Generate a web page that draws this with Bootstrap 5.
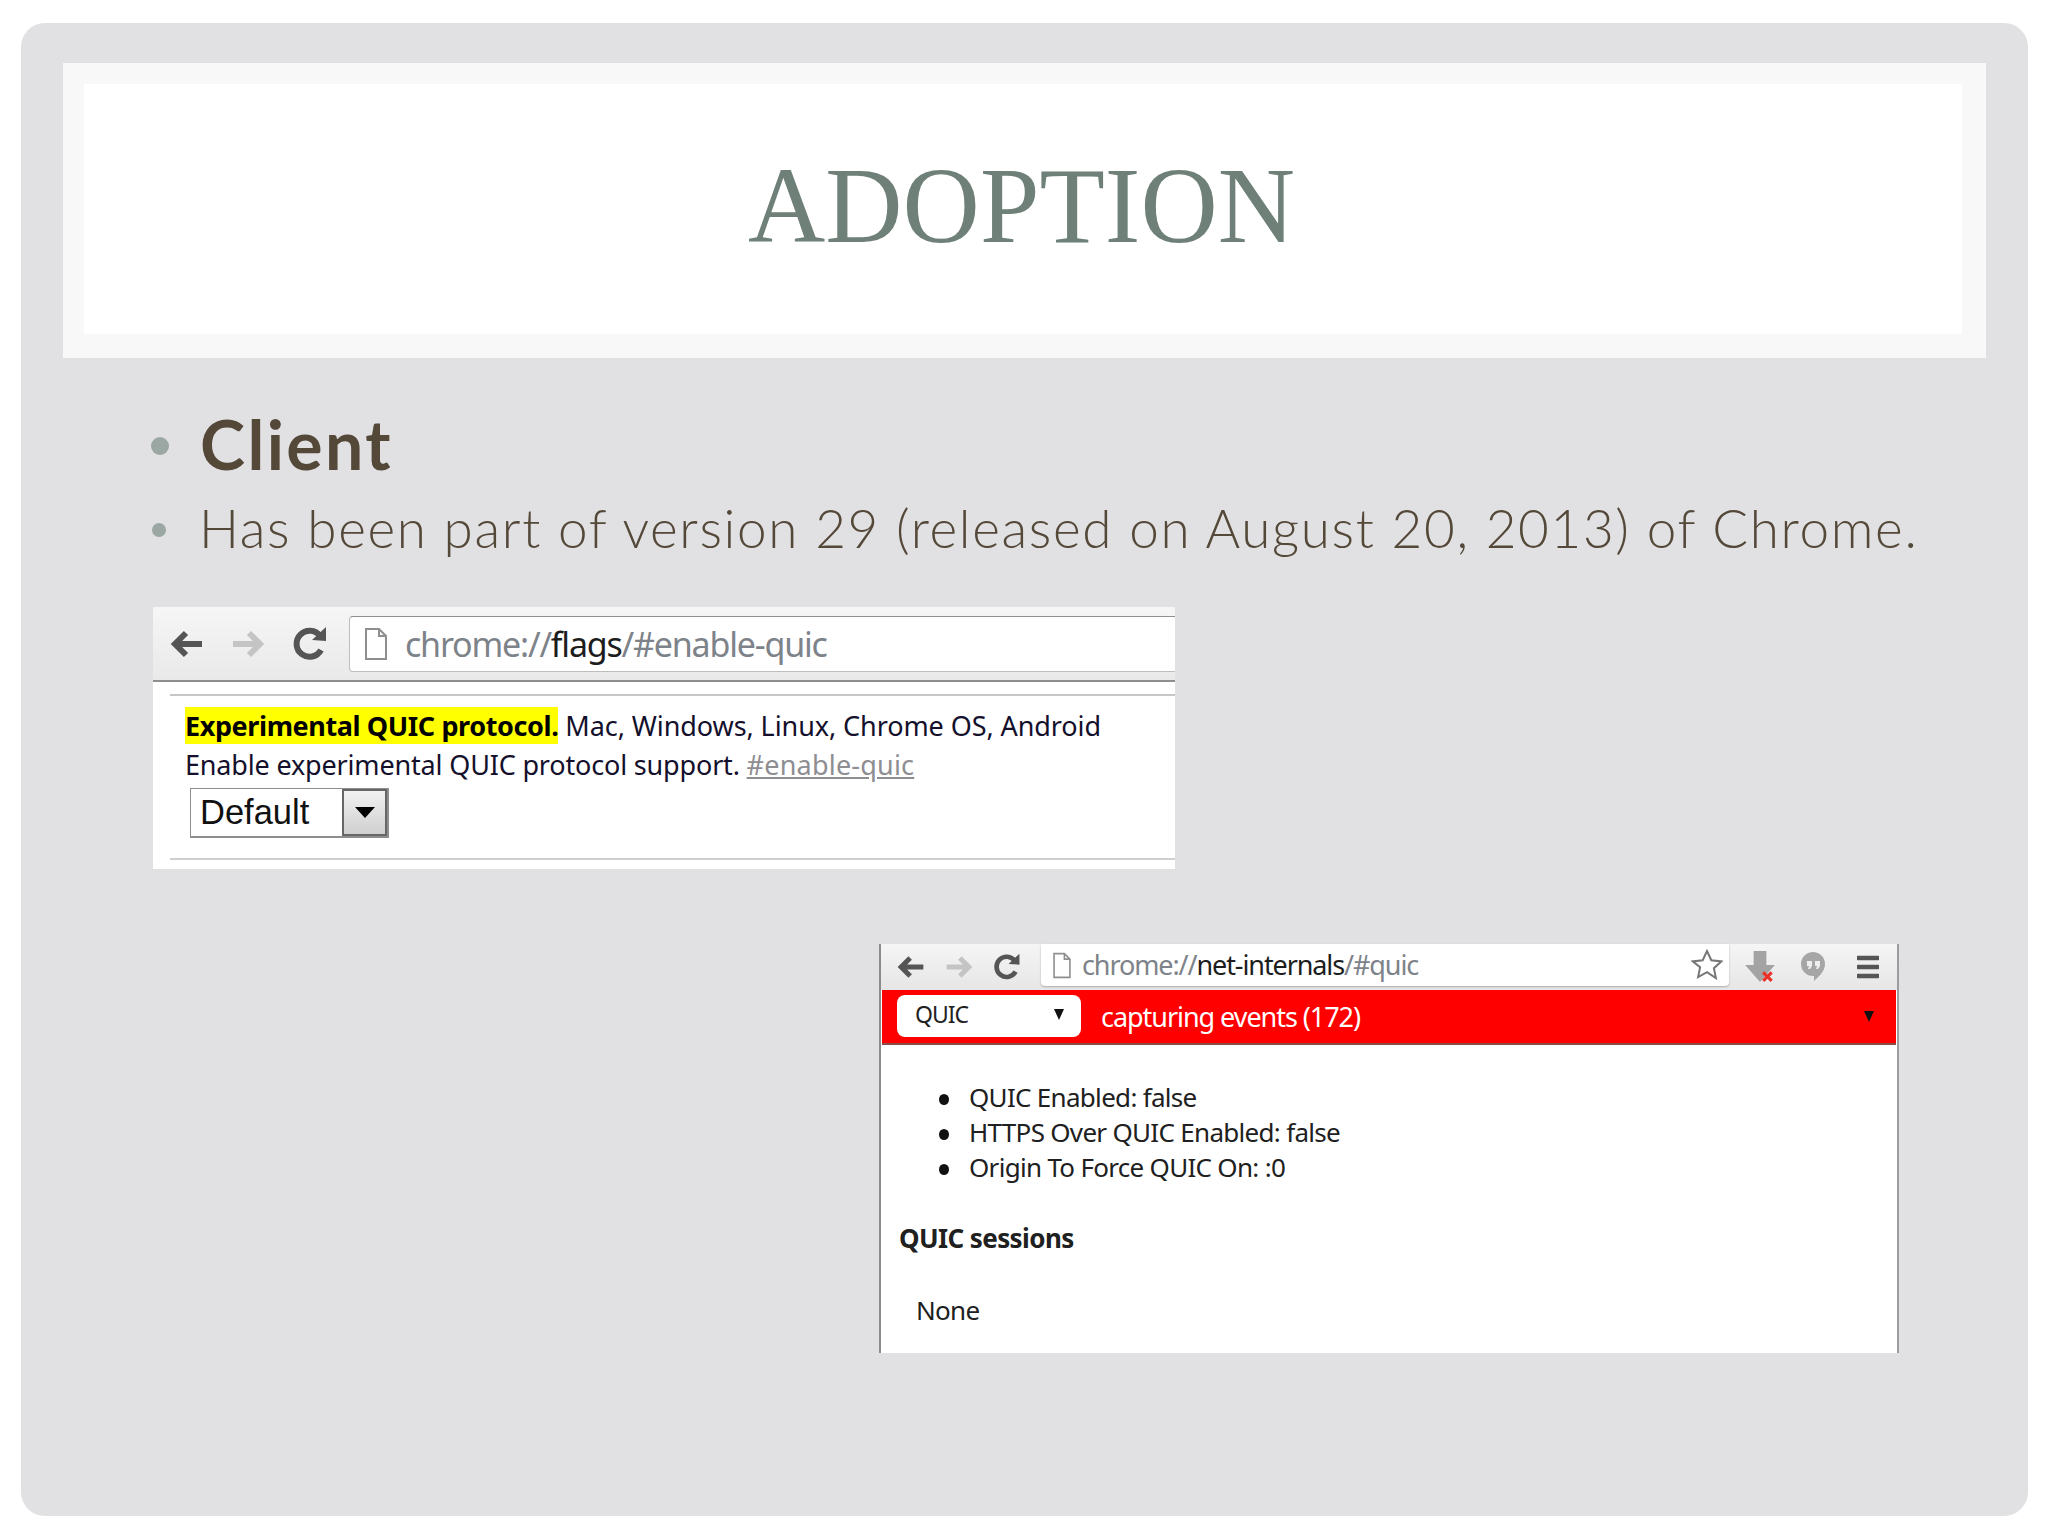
<!DOCTYPE html>
<html lang="en">
<head>
    <meta charset="UTF-8">
    <title>Adoption</title>
    <link href="https://cdn.jsdelivr.net/npm/bootstrap@5.3.0/dist/css/bootstrap.min.css" rel="stylesheet">
    <style>
        body { background: #fff; margin: 0; }
        .slide { width: 2007px; height: 1493px; margin: 23px 0 0 21px; background: #e1e1e3; border-radius: 24px; padding: 40px 42px 0; }
        .title-band { height: 295px; background: #f8f8f8; padding: 21px 24px 21px 21px; }
        .title-inner { height: 250px; background: #fff; }
        .title-inner h1 { font: 400 107px "Liberation Serif", serif; color: #6f8078; margin: 0 3px 5px 0; text-transform: uppercase; }
        .points { list-style: none; margin: 44px 0 0; padding: 0 0 0 88px; font-family: Lato, sans-serif; color: #544839; }
        .points li { display: flex; align-items: center; }
        .dot { flex: none; border-radius: 50%; background: #9aa7a3; }
        .pt-main { font-size: 68px; font-weight: 700; line-height: 84px; letter-spacing: 2.4px; }
        .pt-main .dot { width: 18px; height: 18px; margin: 3px 31px 0 0; }
        .pt-sub { font-size: 53px; font-weight: 300; line-height: 84px; letter-spacing: 1.66px; white-space: nowrap; }
        .pt-sub .dot { width: 14px; height: 14px; margin: 3px 33px 0 1px; }

        .shot-flags { width: 1022px; height: 262px; margin: 37px 0 0 90px; background: #fff; font-family: "Noto Sans", sans-serif; color: #14102c; }
        .bar-flags { height: 75px; background: linear-gradient(#f6f6f6, #e9e9e9); border-bottom: 2px solid #8e8e8e; padding: 9px 0 8px 17px; gap: 27px; }
        .addr { background: #fff; color: #7d8389; white-space: nowrap; }
        .addr b { font-weight: 400; color: #1d1d1d; }
        .addr-flags { flex: 1; height: 56px; margin-left: -6px; border: 1px solid #bdbdbd; border-top-color: #8f8f8f; border-right: 0; border-radius: 4px 0 0 4px; font-size: 34px; letter-spacing: -1.2px; padding-left: 14px; gap: 17px; }
        .flags-body { margin: 12px 0 0 17px; border-top: 2px solid #c6c6c6; padding: 11px 0 0 15px; height: 166px; border-bottom: 2px solid #cfcfcf; }
        .flag-line { font-size: 27px; line-height: 37px; letter-spacing: -.08px; white-space: nowrap; }
        .flag-line + .flag-line { margin-top: 2px; letter-spacing: -.17px; }
        .flag-name { background: #ff0; color: #000; font-weight: 700; letter-spacing: -.4px; padding: 0; }
        .flag-link { color: #8d8d92; text-decoration: underline; letter-spacing: .2px; }
        .fake-select { width: 199px; height: 50px; margin: 5px 0 0 5px; border: 2px solid #8e8e8e; border-left-width: 1px; border-top-width: 1px; font: 34.5px "Liberation Sans", sans-serif; color: #111; padding-left: 9px; }
        .fake-select .arrow-btn { width: 45px; height: 100%; border: 2px solid #666; background: linear-gradient(#f2f2f2, #cfcfcf); }
        .tri { width: 0; height: 0; border-left: 10px solid transparent; border-right: 10px solid transparent; border-top: 11px solid #000; }

        .shot-net { width: 1020px; height: 409px; margin: 75px 0 0 816px; background: #fff; border-left: 2px solid #8b8b8b; border-right: 2px solid #9c9c9c; font-family: "Noto Sans", sans-serif; color: #202020; }
        .bar-net { height: 46px; background: linear-gradient(#f5f5f5, #e6e6e6); padding-left: 16px; gap: 20px; }
        .addr-net { width: 688px; height: 42px; margin: 0 0 4px 0; border-radius: 0 0 4px 4px; box-shadow: 0 1px 2px #aaa; font-size: 27px; letter-spacing: -1.1px; padding: 0 6px 0 11px; gap: 10px; }
        .bar-net .ext-first { margin-left: -6px; }
        .bar-net .ext-next { margin-left: 3px; }
        .bar-net .ext-last { margin-left: 11px; }
        .red-strip { height: 55px; margin: 0 1px; background: #f00; border-bottom: 2px solid #8a4a4a; padding: 5px 22px 0 15px; color: #fff; }
        .strip-select { width: 184px; height: 42px; background: #fff; border-radius: 8px; color: #222; font-size: 23px; letter-spacing: -1px; padding: 0 17px 4px 18px; }
        .tri-sm { width: 0; height: 0; border-left: 5px solid transparent; border-right: 5px solid transparent; border-top: 11px solid #111; }
        .strip-text { font-size: 27px; letter-spacing: -1.05px; margin: 2px 0 0 20px; }
        .net-list { list-style: none; margin: 35px 0 0; padding: 0 0 0 88px; font-size: 26px; line-height: 35px; letter-spacing: -.7px; }
        .net-list li::before { content: ""; display: inline-block; width: 10px; height: 11px; margin: 0 20px 2px -30px; border-radius: 50%; background: #111; vertical-align: middle; }
        .net-head { font-size: 26px; font-weight: 700; letter-spacing: -.6px; margin: 36px 0 0 18px; line-height: 35px; }
        .net-none { font-size: 26px; letter-spacing: -.7px; margin: 37px 0 0 35px; line-height: 35px; }
    </style>
</head>
<body>
    <div class="slide">
        <div class="title-band">
            <div class="title-inner d-flex align-items-center justify-content-center">
                <h1>Adoption</h1>
            </div>
        </div>

        <ul class="points">
            <li class="pt-main"><span class="dot"></span>Client</li>
            <li class="pt-sub"><span class="dot"></span>Has been part of version 29 (released on August 20, 2013) of Chrome.</li>
        </ul>

        <!-- chrome://flags -->
        <div class="shot-flags">
            <div class="bar-flags d-flex align-items-center">
                <svg width="34" height="30" viewBox="0 0 34 30"><path d="M32 15H6M16 4 5 15l11 11" fill="none" stroke="#555" stroke-width="6"/></svg>
                <svg width="34" height="30" viewBox="0 0 34 30"><path d="M2 15h26M18 4l11 11-11 11" fill="none" stroke="#c4c4c4" stroke-width="6"/></svg>
                <svg width="36" height="36" viewBox="0 0 36 36"><path d="M29 24a13 13 0 1 1-1-14" fill="none" stroke="#555" stroke-width="6"/><path d="M20 14 34 15V1z" fill="#555"/></svg>
                <div class="addr addr-flags d-flex align-items-center">
                    <svg width="24" height="34" viewBox="0 0 24 34"><path d="M2 2h13l7 7v23H2z M15 2v7h7" fill="#fff" stroke="#8f8f8f" stroke-width="2"/></svg>
                    <span>chrome://<b>flags</b>/#enable-quic</span>
                </div>
            </div>
            <div class="flags-body">
                <div class="flag-line"><span class="flag-name">Experimental QUIC protocol.</span> Mac, Windows, Linux, Chrome OS, Android</div>
                <div class="flag-line">Enable experimental QUIC protocol support. <span class="flag-link">#enable-quic</span></div>
                <div class="fake-select d-flex align-items-center justify-content-between">
                    <span>Default</span>
                    <span class="arrow-btn d-flex align-items-center justify-content-center"><span class="tri"></span></span>
                </div>
            </div>
        </div>

        <!-- chrome://net-internals -->
        <div class="shot-net">
            <div class="bar-net d-flex align-items-center">
                <svg width="28" height="26" viewBox="0 0 34 30"><path d="M32 15H6M16 4 5 15l11 11" fill="none" stroke="#555" stroke-width="6"/></svg>
                <svg width="28" height="26" viewBox="0 0 34 30"><path d="M2 15h26M18 4l11 11-11 11" fill="none" stroke="#c4c4c4" stroke-width="6"/></svg>
                <svg width="28" height="28" viewBox="0 0 36 36"><path d="M29 24a13 13 0 1 1-1-14" fill="none" stroke="#555" stroke-width="6"/><path d="M20 14 34 15V1z" fill="#555"/></svg>
                <div class="addr addr-net d-flex align-items-center">
                    <svg width="20" height="27" viewBox="0 0 24 34"><path d="M2 2h13l7 7v23H2z M15 2v7h7" fill="#fff" stroke="#8f8f8f" stroke-width="2"/></svg>
                    <span>chrome://<b>net-internals</b>/#quic</span>
                    <svg class="ms-auto" width="32" height="32" viewBox="0 0 32 32"><path d="M16 2l4.3 9.2 10 1.2-7.4 6.8 2 9.9L16 23.2 7.1 28.100l2-9.900L1.700 12.400l10-1.200z" fill="#fff" stroke="#777" stroke-width="2"/></svg>
                </div>
                <svg class="ext-first" width="34" height="34" viewBox="0 0 30 32"><path d="M9 1h12v13h8L15 30 1 14h8z" fill="#a3a3a3"/><path d="M18 21l8 8M26 21l-8 8" stroke="#e8332c" stroke-width="3"/></svg>
                <svg class="ext-next" width="26" height="34" viewBox="0 0 26 32"><path d="M13 1a12 12 0 0 1 12 12c0 8-7 13-11 17v-5H13A12 12 0 0 1 13 1z" fill="#a6a6a6"/><path d="M7 10h5v5l-2 3H8l1-3H7zM15 10h5v5l-2 3h-2l1-3h-2z" fill="#eee"/></svg>
                <svg class="ext-last" width="22" height="24" viewBox="0 0 22 24"><path d="M1 3h20M1 12h20M1 21h20" stroke="#555" stroke-width="4.500" stroke-linecap="round"/></svg>
            </div>
            <div class="red-strip d-flex align-items-start">
                <div class="strip-select d-flex align-items-center justify-content-between"><span>QUIC</span><span class="tri-sm"></span></div>
                <span class="strip-text">capturing events (172)</span>
                <span class="tri-sm ms-auto mt-3"></span>
            </div>
            <ul class="net-list">
                <li>QUIC Enabled: false</li>
                <li>HTTPS Over QUIC Enabled: false</li>
                <li>Origin To Force QUIC On: :0</li>
            </ul>
            <div class="net-head">QUIC sessions</div>
            <div class="net-none">None</div>
        </div>
    </div>
    <script src="https://cdn.jsdelivr.net/npm/bootstrap@5.3.0/dist/js/bootstrap.bundle.min.js"></script>
</body>
</html>
